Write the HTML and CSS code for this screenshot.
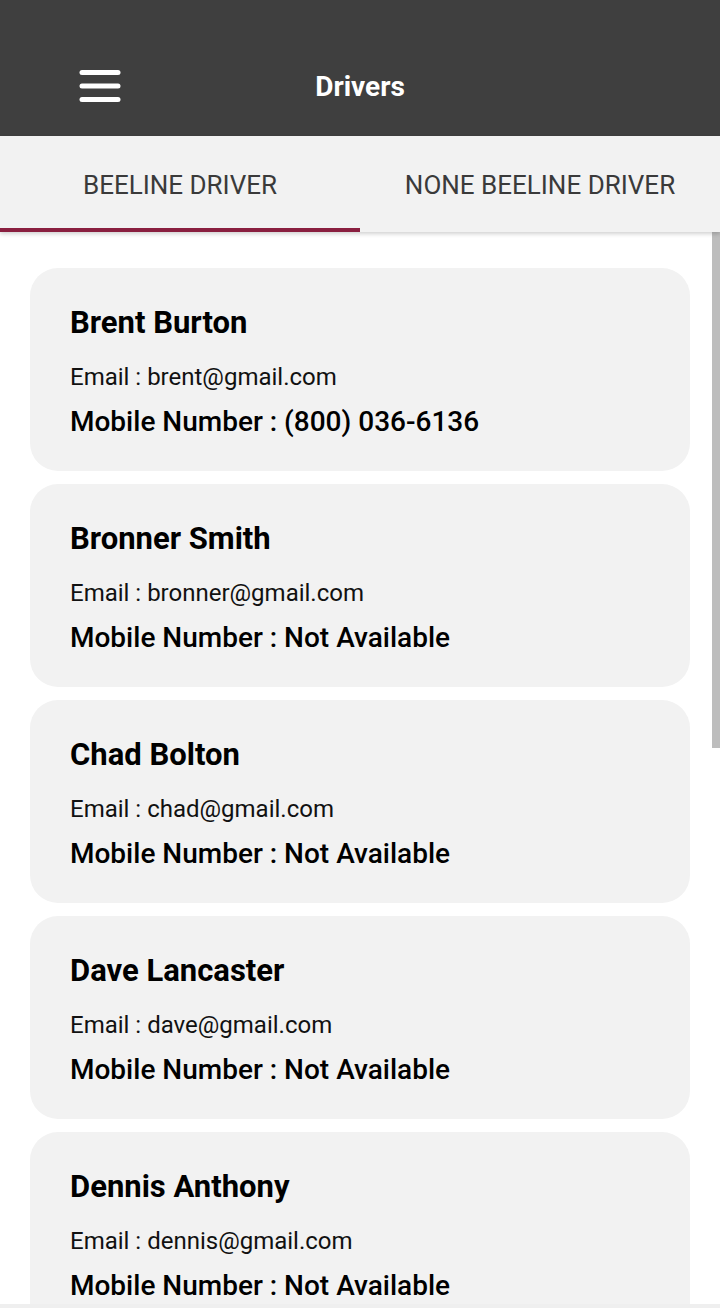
FILE: index.html
```html
<!DOCTYPE html>
<html>
<head>
<meta charset="utf-8">
<link rel="stylesheet" href="styles.css">
</head>
<body>
<div class="app">
  <header class="topbar">
    <div class="menu">
      <svg width="42" height="34" viewBox="0 0 42 34"><g stroke="#fff" stroke-width="5" stroke-linecap="round"><line x1="3" y1="3.5" x2="39" y2="3.5"/><line x1="3" y1="17" x2="39" y2="17"/><line x1="3" y1="30.5" x2="39" y2="30.5"/></g></svg>
    </div>
    <h1 class="title">Drivers</h1>
  </header>
  <nav class="tabs">
    <div class="tab active">BEELINE DRIVER</div>
    <div class="tab">NONE BEELINE DRIVER</div>
  </nav>
  <main class="list">
    <div class="card">
      <div class="name">Brent Burton</div>
      <div class="email">Email : brent@gmail.com</div>
      <div class="mobile">Mobile Number : (800) 036-6136</div>
    </div>
    <div class="card">
      <div class="name">Bronner Smith</div>
      <div class="email">Email : bronner@gmail.com</div>
      <div class="mobile">Mobile Number : Not Available</div>
    </div>
    <div class="card">
      <div class="name">Chad Bolton</div>
      <div class="email">Email : chad@gmail.com</div>
      <div class="mobile">Mobile Number : Not Available</div>
    </div>
    <div class="card">
      <div class="name">Dave Lancaster</div>
      <div class="email">Email : dave@gmail.com</div>
      <div class="mobile">Mobile Number : Not Available</div>
    </div>
    <div class="card">
      <div class="name">Dennis Anthony</div>
      <div class="email">Email : dennis@gmail.com</div>
      <div class="mobile">Mobile Number : Not Available</div>
    </div>
    <div class="scrollbar"></div>
  </main>
  <div class="bottom"></div>
</div>
</body>
</html>
```

FILE: styles.css
```css
* { box-sizing: border-box; }
html, body { margin: 0; padding: 0; }
body {
  font-family: Roboto, "Liberation Sans", sans-serif;
  background: #fff;
  overflow: hidden;
}
.app {
  width: 720px;
  height: 1308px;
  display: flex;
  flex-direction: column;
}
.topbar {
  height: 136px;
  background: #3f3f3f;
  display: flex;
  align-items: center;
  padding: 36px 0 0 79px;
}
.menu { width: 42px; height: 34px; display: flex; }
.title {
  flex: 1;
  margin: 0;
  text-align: center;
  color: #fff;
  font-size: 28px;
  font-weight: 700;
  padding-right: 121px;
}
.tabs {
  height: 96px;
  background: #f2f2f2;
  display: flex;
  position: relative;
  z-index: 2;
  box-shadow: 0 2px 4px rgba(0,0,0,0.18);
}
.tab {
  flex: 1;
  display: flex;
  align-items: center;
  justify-content: center;
  font-size: 26px;
  color: #3a3a3a;
  font-weight: 400;
  padding-top: 6px;
  border-bottom: 4px solid transparent;
}
.tab.active { border-bottom-color: #8a1f40; }
.list {
  flex: 1;
  overflow: hidden;
  position: relative;
  display: flex;
  flex-direction: column;
  gap: 13px;
  padding: 36px 30px 0 30px;
}
.card {
  flex-shrink: 0;
  background: #f2f2f2;
  border-radius: 28px;
  height: 203px;
  padding: 37px 40px 0 40px;
  display: flex;
  flex-direction: column;
  color: #000;
}
.name {
  font-size: 31px;
  font-weight: 700;
  line-height: 36px;
}
.email {
  font-size: 24px;
  line-height: 30px;
  margin-top: 21px;
  color: #111;
}
.mobile {
  font-size: 28px;
  font-weight: 500;
  line-height: 34px;
  margin-top: 13px;
}
.scrollbar {
  position: absolute;
  right: 0;
  top: 0;
  width: 8px;
  height: 516px;
  background: #bdbdbd;
}
.bottom {
  height: 4px;
  background: #efefef;
}
```
